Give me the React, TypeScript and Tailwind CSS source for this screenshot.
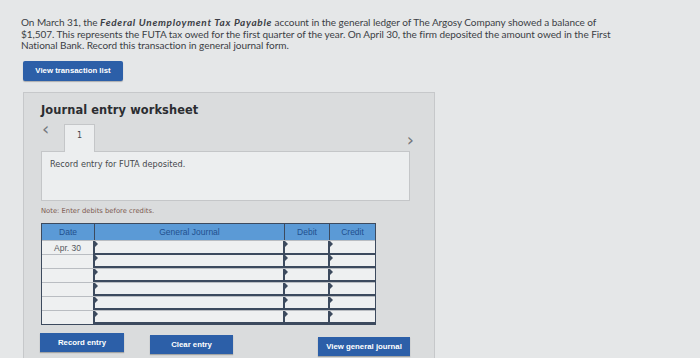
const rows = ["Apr. 30", "", "", "", "", ""];

function BlueButton({ label, className }: { label: string; className?: string }) {
  return (
    <button
      className={
        "flex items-center justify-center bg-[#2c5fa8] text-white text-[7.8px] font-bold font-['Liberation_Sans',sans-serif] shadow-[0_1px_1px_rgba(0,0,0,0.25)] " +
        (className ?? "")
      }
    >
      {label}
    </button>
  );
}

function Marker() {
  return (
    <span className="absolute left-0 top-0 w-0 h-0 border-t-[3px] border-b-[3px] border-l-[3px] border-t-transparent border-b-transparent border-l-[#3c4a5e]" />
  );
}

export default function App() {
  return (
    <div className="w-[700px] h-[358px] overflow-hidden bg-[#e5e7e8] relative font-['Lato',sans-serif]">
      {/* problem text */}
      <div className="pl-[21px] pt-[17px] text-[10px] leading-[11.6px] text-[#3b3e45] tracking-[-0.05px]">
        <p>
          On March 31, the <b className="tracking-[0.7px]"><i>Federal Unemployment Tax Payable</i></b> account in the general ledger of The Argosy Company showed a balance of
        </p>
        <p>
          $1,507. This represents the FUTA tax owed for the first quarter of the year. On April 30, the firm deposited the amount owed in the First
        </p>
        <p>National Bank. Record this transaction in general journal form.</p>
      </div>

      <div className="pl-[23px] pt-[9px]">
        <BlueButton label="View transaction list" className="w-[100px] h-[20px] rounded-[2px]" />
      </div>

      {/* worksheet panel */}
      <div className="ml-[23px] mt-[11px] w-[412px] h-[280px] bg-[#dadcdd] border border-[#c6c8ca] pl-[17px] pr-[24px] pt-[9px]">
        <h2 className="text-[11.4px] leading-[16px] font-bold text-[#2b2d31] font-['DejaVu_Sans',sans-serif] tracking-[0.1px]">
          Journal entry worksheet
        </h2>

        <div className="flex items-end mt-[5px] h-[28px]">
          <span className="text-[#74777c] text-[18px] leading-none mb-[13px] ml-[1px] w-[22px] font-['DejaVu_Sans',sans-serif]">‹</span>
          <div className="w-[31px] h-[28px] bg-[#eceeef] border border-b-0 border-[#c4c6c8] flex justify-center pt-[5px] text-[8px] text-[#44474c] font-['DejaVu_Sans',sans-serif] relative top-[1px]">
            1
          </div>
          <div className="flex-1" />
          <span className="text-[#74777c] text-[18px] leading-none mb-[2px] mr-[-4px] font-['DejaVu_Sans',sans-serif]">›</span>
        </div>

        <div className="w-[369px] h-[50px] bg-[#eceeef] border border-[#c4c6c8] pl-[8px] pt-[6px] text-[8.2px] text-[#44474c] font-['DejaVu_Sans',sans-serif]">
          Record entry for FUTA deposited.
        </div>

        <p className="mt-[5px] text-[6.8px] text-[#7c5a50] font-['DejaVu_Sans',sans-serif]">Note: Enter debits before credits.</p>

        {/* journal table */}
        <div className="mt-[7px] w-[335px] border border-[#3c4a5e] font-['Liberation_Sans',sans-serif]">
          <div className="grid grid-cols-[53px_190px_45px_1fr] h-[16px] bg-[#5b9ad6] text-[#22508e] text-[8.5px]">
            <div className="flex items-center justify-center border-r border-[#3c4a5e]">Date</div>
            <div className="flex items-center justify-center border-r border-[#3c4a5e]">General Journal</div>
            <div className="flex items-center justify-center border-r border-[#3c4a5e]">Debit</div>
            <div className="flex items-center justify-center">Credit</div>
          </div>
          {rows.map((date, i) => (
            <div key={i} className="grid grid-cols-[53px_190px_45px_1fr] h-[14px] bg-[#eef0f1] border-t border-[#b9bdc2]">
              <div className="flex items-start justify-center pt-[1px] text-[8.5px] text-[#55585e] border-r-2 border-[#3c4a5e]">{date}</div>
              <div className="relative border-r-2 border-[#3c4a5e] border-b-2">
                <Marker />
              </div>
              <div className="relative border-r-2 border-[#3c4a5e] border-b-2">
                <Marker />
              </div>
              <div className="relative border-b-2 border-[#3c4a5e]">
                <Marker />
              </div>
            </div>
          ))}
        </div>

        <div className="flex items-start mt-[8px] ml-[-1px]">
          <BlueButton label="Record entry" className="w-[85px] h-[19px]" />
          <BlueButton label="Clear entry" className="w-[84px] h-[19px] ml-[26px] mt-[2px]" />
          <BlueButton label="View general journal" className="w-[93px] h-[19px] ml-[85px] mt-[4px]" />
        </div>
      </div>
    </div>
  );
}
